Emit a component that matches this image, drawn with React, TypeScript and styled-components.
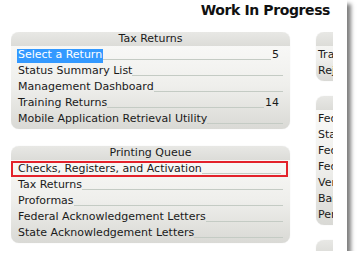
import styled, { createGlobalStyle } from "styled-components";

const GlobalStyle = createGlobalStyle`
  html, body {
    margin: 0;
    padding: 0;
    background: #ffffff;
  }
  body {
    font-family: "DejaVu Sans", Verdana, sans-serif;
  }
`;

type Item = { label: string; count?: number; selected?: boolean; outlined?: boolean };

const taxReturns: Item[] = [
  { label: "Select a Return", count: 5, selected: true },
  { label: "Status Summary List" },
  { label: "Management Dashboard" },
  { label: "Training Returns", count: 14 },
  { label: "Mobile Application Retrieval Utility" },
];

const printingQueue: Item[] = [
  { label: "Checks, Registers, and Activation", outlined: true },
  { label: "Tax Returns" },
  { label: "Proformas" },
  { label: "Federal Acknowledgement Letters" },
  { label: "State Acknowledgement Letters" },
];

const transmit: Item[] = [{ label: "Transmit Returns" }, { label: "Rejected Returns" }];

const reports: Item[] = [
  { label: "Federal Fees" },
  { label: "State Fees" },
  { label: "Federal Refunds" },
  { label: "Federal Balance Due" },
  { label: "Verification" },
  { label: "Bank Products" },
  { label: "Pending" },
];

const Panel = ({ title, items, inset = 7 }: { title: string; items: Item[]; inset?: number }) => (
  <Card>
    <CardHeader>{title}</CardHeader>
    <CardBody>
      {items.map((it) => (
        <Row key={it.label} $inset={inset} $outlined={it.outlined}>
          <Label $selected={it.selected}>{it.label}</Label>
          <Leader />
          {it.count !== undefined && <Count>{it.count}</Count>}
        </Row>
      ))}
    </CardBody>
  </Card>
);

const App = () => {
  return (
    <>
      <GlobalStyle />
      <Frame>
        <Title>Work In Progress</Title>
        <Viewport>
          <LeftColumn>
            <Panel title="Tax Returns" items={taxReturns} />
            <Panel title="Printing Queue" items={printingQueue} />
          </LeftColumn>
          <RightColumn>
            <Panel title="Transmission" items={transmit} inset={2} />
            <Panel title="Reports" items={reports} inset={2} />
            <Panel title="Utilities" items={[]} inset={2} />
          </RightColumn>
        </Viewport>
      </Frame>
    </>
  );
};

const Frame = styled.div`
  width: 347px;
  height: 251px;
  background: #ffffff;
  box-shadow: 4px 4px 4px rgba(0, 0, 0, 0.5);
  overflow: hidden;
`;

const Title = styled.div`
  height: 32px;
  box-sizing: border-box;
  padding: 2px 17px 0 0;
  text-align: right;
  font-size: 14px;
  font-weight: bold;
  letter-spacing: -0.4px;
  color: #111111;
`;

const Viewport = styled.div`
  display: flex;
  gap: 26px;
  margin-left: 11px;
  width: 322px;
  overflow: hidden;
`;

const LeftColumn = styled.div`
  flex: 0 0 279px;
  display: flex;
  flex-direction: column;
  gap: 17px;
`;

const RightColumn = styled.div`
  flex: 0 0 200px;
  display: flex;
  flex-direction: column;
  gap: 15px;
`;

const Card = styled.div`
  border-radius: 8px;
  background: linear-gradient(#fbfbfa 0%, #efefec 55%, #d9d9d5 100%);
  box-shadow: 0 0 1px rgba(0, 0, 0, 0.15);
  padding-bottom: 2px;
  min-height: 20px;
  overflow: hidden;
`;

const CardHeader = styled.div`
  height: 14px;
  line-height: 14px;
  text-align: center;
  font-size: 11px;
  color: #1a1a1a;
  background: linear-gradient(#e8e8e5 0%, #dcdcd8 100%);
  margin-bottom: 1px;
`;

const CardBody = styled.div`
  display: flex;
  flex-direction: column;
`;

const Row = styled.div<{ $inset: number; $outlined?: boolean }>`
  display: flex;
  align-items: flex-end;
  height: 16px;
  padding: 0 7px 0 ${(p) => p.$inset}px;
  font-size: 11px;
  color: #1a1a1a;
  white-space: nowrap;
  box-sizing: border-box;
  ${(p) =>
    p.$outlined &&
    `
    outline: 2px solid #e3222b;
    outline-offset: -2px;
    margin: 0 2px 0 0;
  `}
`;

const Label = styled.span<{ $selected?: boolean }>`
  line-height: 12px;
  padding-bottom: 2px;
  ${(p) =>
    p.$selected &&
    `
    background: #3399ff;
    color: #ffffff;
    margin-left: -1px;
    padding-left: 1px;
    padding-right: 1px;
  `}
`;

const Leader = styled.span`
  flex: 1;
  min-width: 0;
  margin-bottom: 3px;
  border-bottom: 1px solid #c4cbc4;
`;

const Count = styled.span`
  line-height: 12px;
  padding: 0 4px 2px 1px;
`;

export default App;
